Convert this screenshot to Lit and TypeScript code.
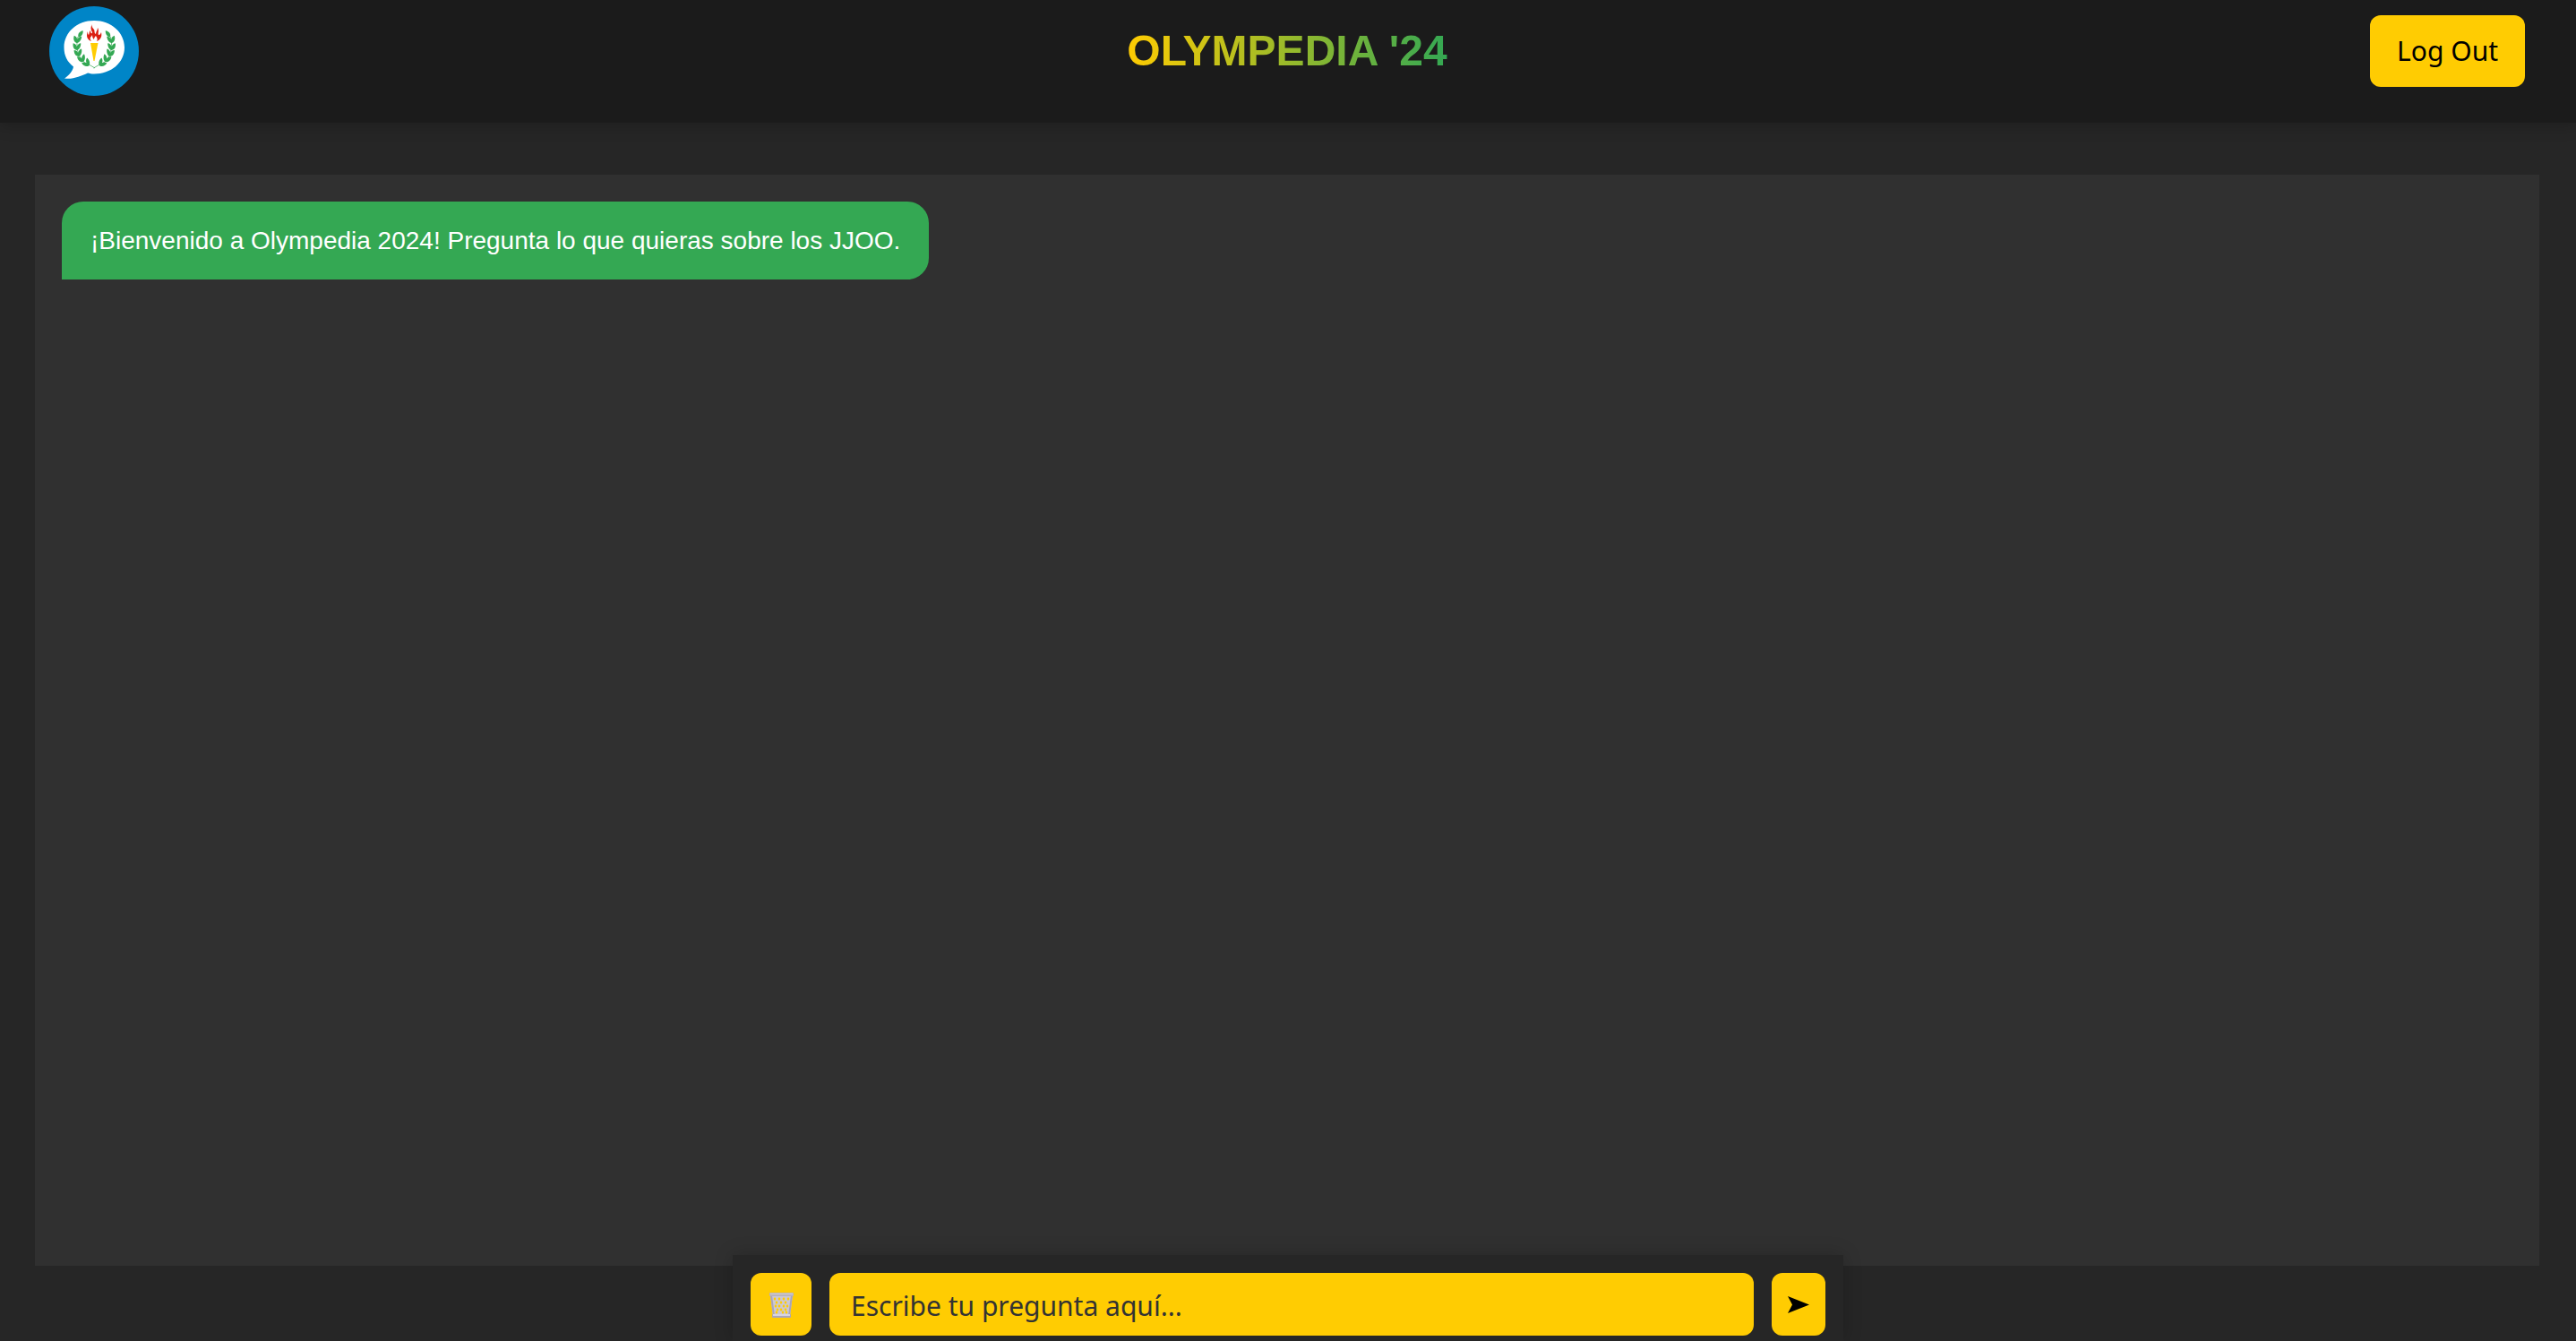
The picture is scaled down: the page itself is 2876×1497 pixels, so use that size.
import { LitElement, html, css, svg } from "lit";
import { customElement, state } from "lit/decorators.js";

interface Message {
  from: "bot" | "user";
  text: string;
}

// Leaf clusters along the left branch of the laurel: centre and rotation.
const LEAVES: [number, number, number][] = [
  [31, 37, 4],
  [30.5, 45, -4],
  [32, 52, -14],
  [36, 58.5, -26],
  [41.5, 63.5, -48],
];

const branch = svg`
  <path d="M37.700 27.300C33.500 28 31.500 31 32.500 34.500C36 34 38 31 37.700 27.300Z"/>
  ${LEAVES.map(
    ([x, y, r]) => svg`
    <path transform="translate(${x} ${y}) rotate(${r})"
      d="M0 4C-3.500 3-4.500-0.500-3.500-4C-1.500-3.500-0.200-2 0.200 0C1-2 3-3.500 5-3.500C5 0 3 3.500 0 4Z"/>`
  )}
  <path d="M32 34C29 46 32 62 46 66L51 69" fill="none" stroke="#34a853" stroke-width="0.7"/>`;

// Openings in the basket's wire mesh, in staggered rows.
const HOLES: [number, number][] = [
  [9, 10], [14, 10], [19, 10], [24, 10],
  [11, 14], [16, 14], [21, 14],
  [10, 18], [14, 18], [19, 18], [23, 18],
  [12, 22], [16, 22], [21, 22],
  [11, 25], [18, 25], [22, 25],
];

@customElement("olympedia-logo")
export class OlympediaLogo extends LitElement {
  static styles = css`
    :host {
      display: block;
    }
    .logo {
      display: block;
      width: 100px;
      height: 100px;
    }
  `;

  render() {
    return html`
      <svg class="logo" viewBox="0 0 100 100" role="img" aria-label="Olympedia">
        <circle cx="50" cy="50" r="50" fill="#0085c7" />
        <path
          fill="#fff"
          d="M50 16C69 16 84 29 84 46C84 63 69 75.500 50 75.500C47 75.500 45 75 43 74.500C35 78 26 82 17 80.500C22 77 26 73 27 67.500C20 62 16.500 55 16.500 46C16.500 29 31 16 50 16Z"
        />
        <g fill="#34a853">${branch}</g>
        <g fill="#34a853" transform="translate(100.500 0) scale(-1 1)">${branch}</g>
        <path fill="#ffcc02" d="M46 41H54.500L50.500 61H49.500Z" />
        <path
          fill="#db1f12"
          d="M48 20C46 23 46 26 48 29C48 31 46 31 46 27C44 29 45 31 44 32C43 31 43 30 43 28C41 33 42 37 47 39C44 35 47 34 48 32C48 35 49 36 50 37C50 35 51 34 52 33C54 36 54 37 53 39C58 37 59 33 58 29C57 31 57 32 55 32C54 30 56 27 54 24C54 27 52 28 52 31C50 30 51 28 50 26C48 24 47 22 48 20Z"
        />
      </svg>
    `;
  }
}

@customElement("app-root")
export class AppRoot extends LitElement {
  static styles = css`
    :host {
      display: block;
      font-family: "Liberation Sans", Arial, sans-serif;
      color: #fff;
    }
    * {
      box-sizing: border-box;
    }
    .page {
      display: flex;
      flex-direction: column;
      height: 100vh;
      overflow: hidden;
      background: #262626;
    }
    .header {
      display: grid;
      grid-template-columns: 1fr auto 1fr;
      align-items: center;
      padding: 7px 57px 30px 55px;
      background: #1b1b1b;
      box-shadow: 0 4px 16px rgba(0, 0, 0, 0.2);
    }
    .title {
      margin: 0;
      font-size: 48px;
      line-height: 56px;
      font-weight: 700;
      color: transparent;
      background: linear-gradient(90deg, #ffcc02, #34a853);
      background-clip: text;
      -webkit-background-clip: text;
    }
    .button,
    .question {
      border: 0;
      border-radius: 12px;
      background: #ffcc02;
      color: #000;
      font-family: "Noto Sans", Tahoma, sans-serif;
      font-size: 30px;
      line-height: 40px;
    }
    .button {
      cursor: pointer;
    }
    .logout {
      justify-self: end;
      padding: 20px 30px;
    }
    .chat {
      flex: 1;
      min-height: 0;
      margin: 58px 41px 84px 39px;
      padding: 30px;
      overflow: auto;
      background: #303030;
    }
    .messages {
      display: flex;
      flex-direction: column;
      align-items: flex-start;
      gap: 20px;
      margin: 0;
      padding: 0;
      list-style: none;
    }
    .message {
      padding: 28px 32px 27px;
      border-radius: 24px 24px 24px 0;
      background: #34a853;
      font-size: 28px;
      line-height: 32px;
    }
    .message-user {
      align-self: flex-end;
      border-radius: 24px 24px 0 24px;
      background: #0085c7;
    }
    .composer {
      position: fixed;
      bottom: 0;
      left: 0;
      right: 0;
      display: flex;
      gap: 20px;
      width: 1240px;
      max-width: 100%;
      margin: 0 auto;
      padding: 20px 20px 6px;
      background: #262626;
      box-shadow: 0 0 20px rgba(0, 0, 0, 0.2);
    }
    .question {
      flex: 1;
      min-width: 0;
      height: 70px;
      padding: 2px 24px 0;
    }
    .question::placeholder {
      color: #333;
      opacity: 1;
    }
    .clear,
    .send {
      display: grid;
      place-items: center;
      padding: 0 18px;
    }
    .clear-icon {
      width: 32px;
      height: 32px;
    }
    .send-icon {
      width: 24px;
      height: 24px;
    }
  `;

  @state() private messages: Message[] = [
    {
      from: "bot",
      text: "¡Bienvenido a Olympedia 2024! Pregunta lo que quieras sobre los JJOO.",
    },
  ];

  private submit(event: Event) {
    event.preventDefault();
    const form = event.target as HTMLFormElement;
    const text = String(new FormData(form).get("question") ?? "").trim();
    if (!text) return;
    this.messages = [...this.messages, { from: "user", text }];
    form.reset();
  }

  private clear() {
    this.messages = this.messages.slice(0, 1);
  }

  render() {
    return html`
      <div class="page">
        <header class="header">
          <olympedia-logo></olympedia-logo>
          <h1 class="title">OLYMPEDIA '24</h1>
          <button class="button logout" type="button">Log Out</button>
        </header>
        <main class="chat">
          <ul class="messages">
            ${this.messages.map(
              (m) => html`<li class="message ${m.from === "user" ? "message-user" : ""}">${m.text}</li>`
            )}
          </ul>
        </main>
        <form class="composer" @submit=${this.submit}>
          <button class="button clear" type="button" aria-label="Borrar" @click=${this.clear}>
            <svg class="clear-icon" viewBox="0 0 32 32" aria-hidden="true">
              <path d="M4 6H29L26 29H7Z" fill="#ccc8d4" />
              <path d="M4 6H6L9 29H7ZM27 6H29L26 29H24Z" fill="#aaa5b8" />
              ${HOLES.map(
                ([x, y]) => svg`<path d="M${x} ${y - 2}l1.500 2l-1.500 2l-1.500 -2Z" fill="#ffcc02"/>`
              )}
              <rect x="3" y="3" width="27" height="4" rx="1" fill="#b8b3bf" />
              <rect x="4" y="4" width="25" height="1" fill="#d5cfc8" />
              <rect x="6" y="27" width="21" height="4" rx="1" fill="#aaa5b8" />
              <rect x="7" y="27" width="19" height="2" fill="#d8d5df" />
            </svg>
          </button>
          <input
            class="question"
            type="text"
            name="question"
            aria-label="Pregunta"
            autocomplete="off"
            placeholder="Escribe tu pregunta aquí..."
          />
          <button class="button send" type="submit" aria-label="Enviar">
            <svg class="send-icon" viewBox="0 0 24 24" aria-hidden="true">
              <path d="M0 3L24 12.500L0 22L5 12.500Z" />
            </svg>
          </button>
        </form>
      </div>
    `;
  }
}
